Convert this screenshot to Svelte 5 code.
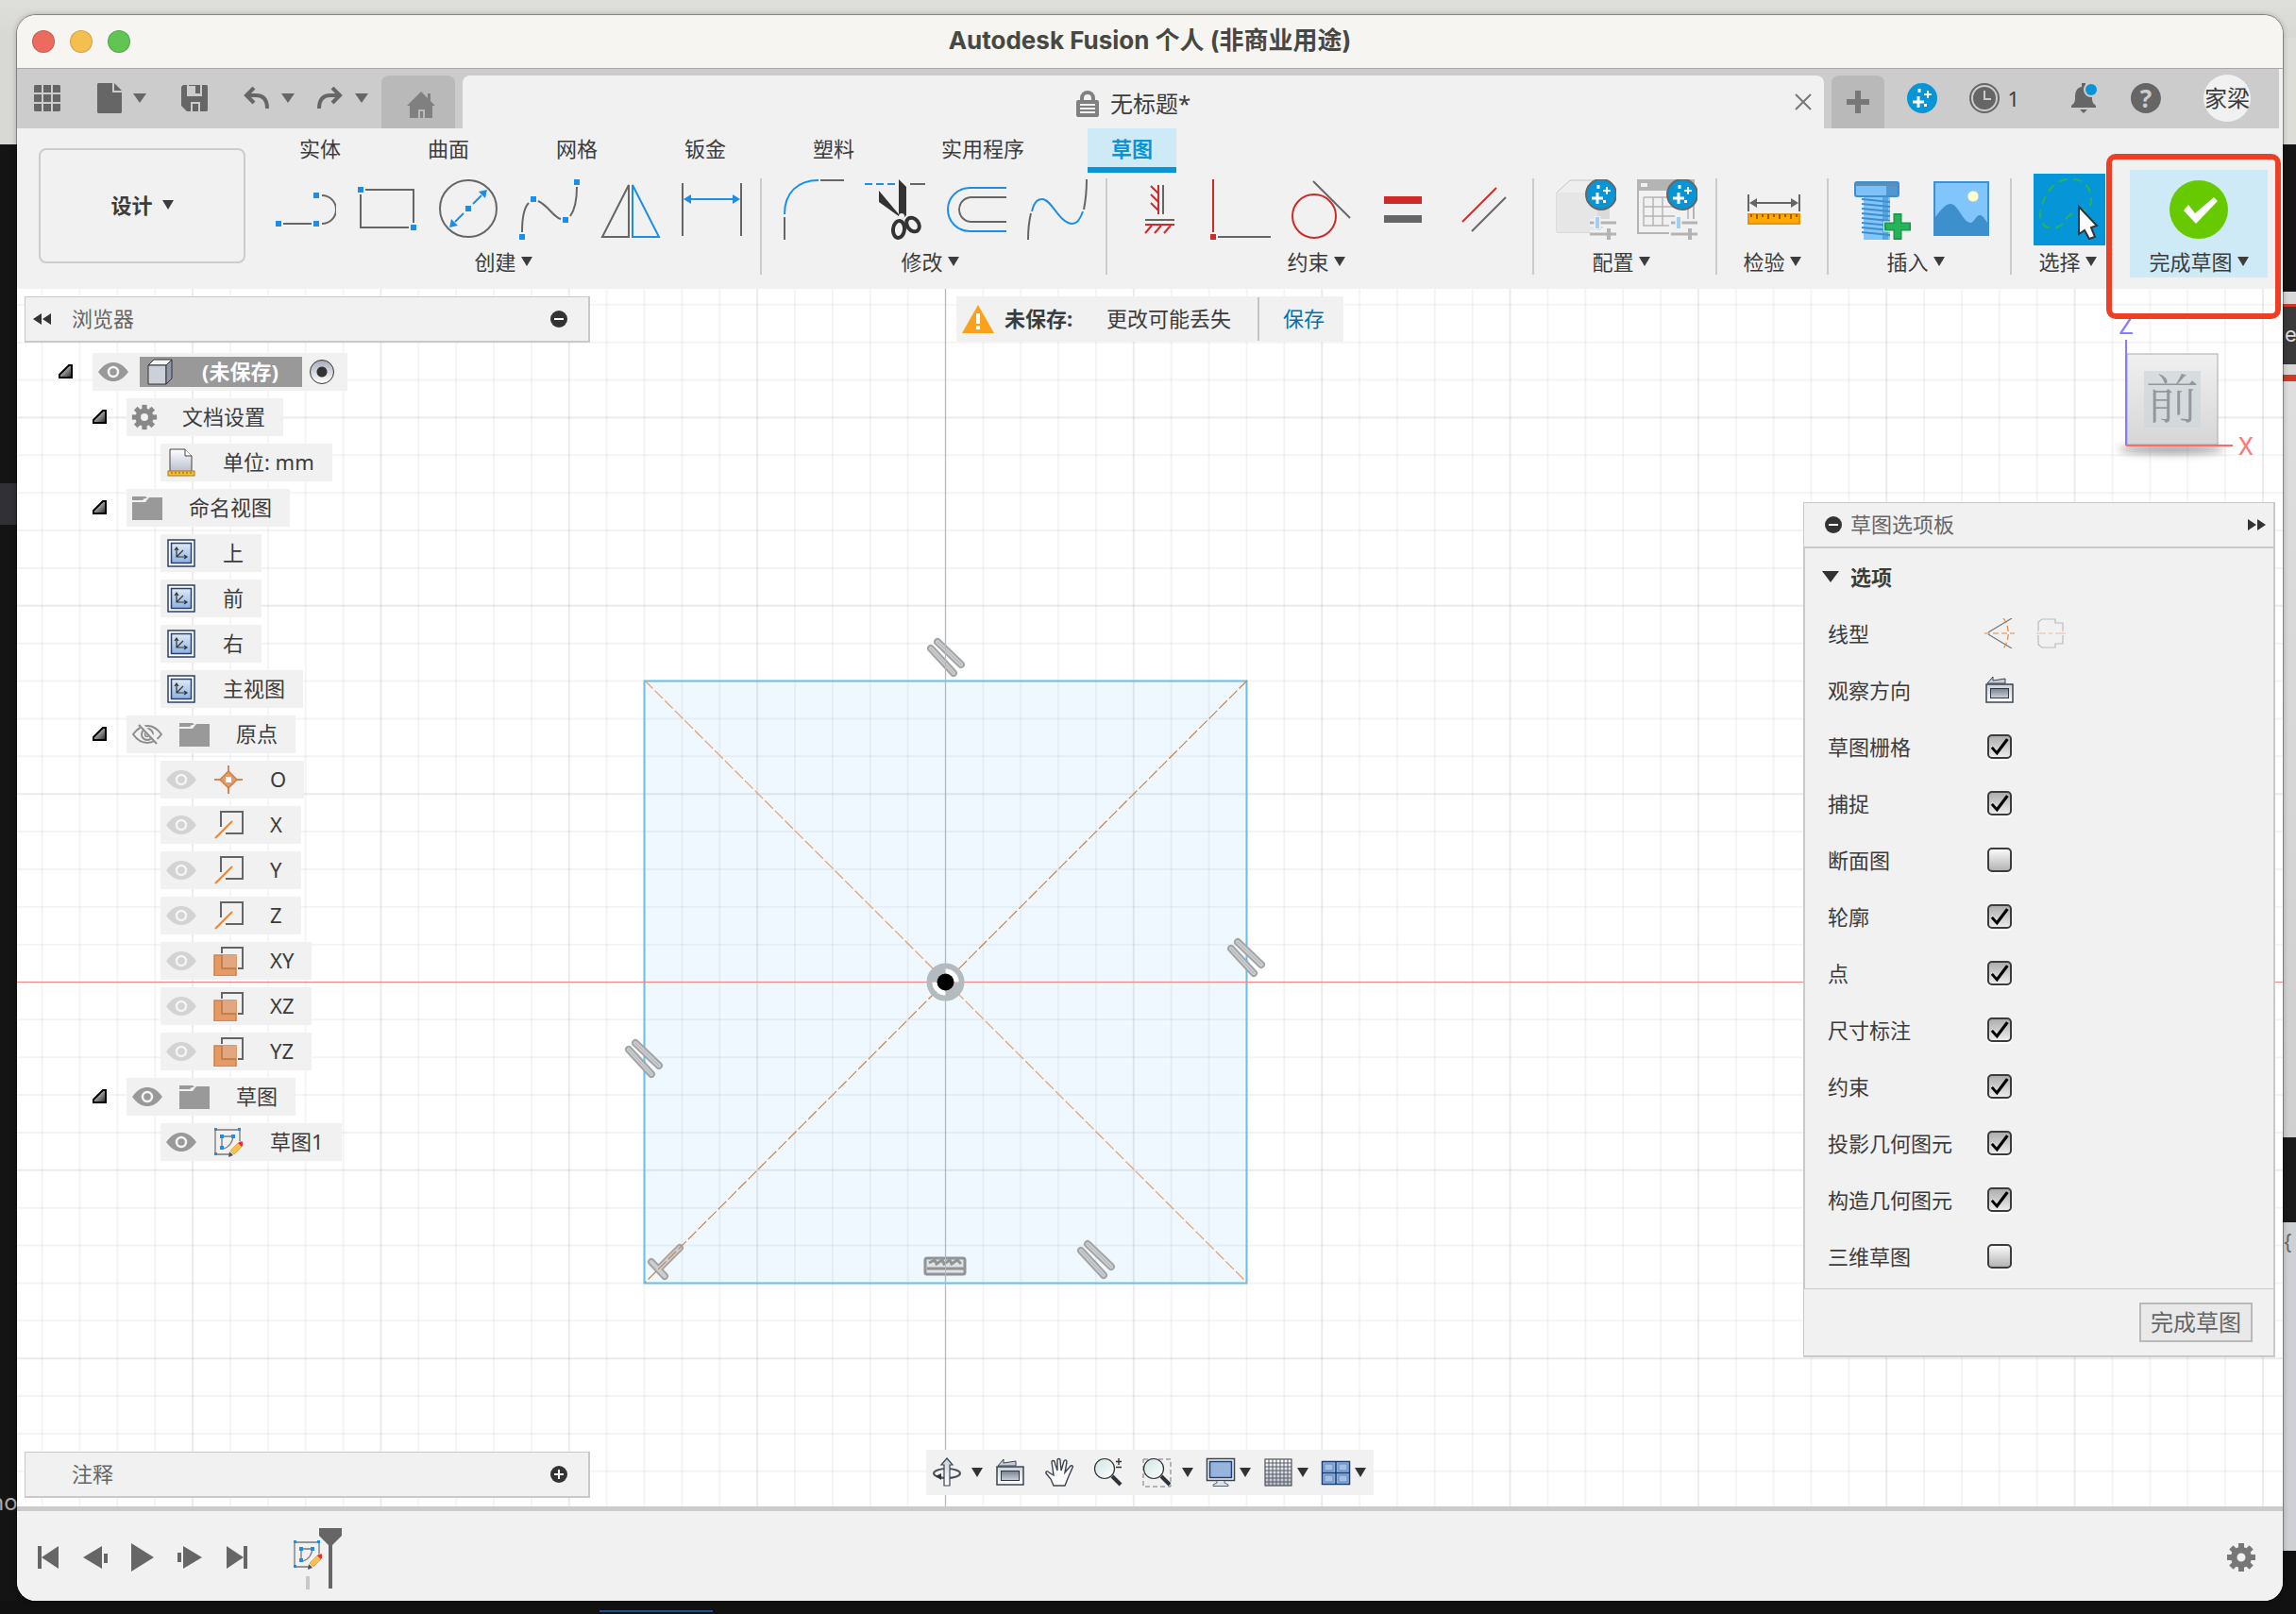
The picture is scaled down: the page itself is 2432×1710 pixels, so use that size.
<script>
  const STEP = 39.87;
  const ORIGIN = { x: 983.5, y: 734.5 };

  const columns = Array.from({ length: 60 }, (_, i) => i - 24);
  const rows = Array.from({ length: 34 }, (_, i) => i - 18);

  const workspaceTabs = ['实体', '曲面', '网格', '钣金', '塑料', '实用程序', '草图'];
  let activeTab = $state('草图');

  const groups = [
    { label: '创建', tools: ['line', 'rect', 'circle', 'spline', 'mirror', 'dimension'] },
    { label: '修改', tools: ['fillet', 'trim', 'offset', 'curve'] },
    { label: '约束', tools: ['horizontal', 'coincident', 'tangent', 'equal', 'parallel'] },
    { label: '配置', tools: ['config', 'configTable'] },
    { label: '检验', tools: ['measure'] },
    { label: '插入', tools: ['bolt', 'picture'] },
  ];

  const tree = [
    { level: 1, open: true, icons: ['gear'], label: '文档设置' },
    { level: 2, icons: ['unit'], label: '单位: mm' },
    { level: 1, open: true, icons: ['folder'], label: '命名视图' },
    { level: 2, icons: ['view'], label: '上' },
    { level: 2, icons: ['view'], label: '前' },
    { level: 2, icons: ['view'], label: '右' },
    { level: 2, icons: ['view'], label: '主视图' },
    { level: 1, open: true, icons: ['eyeOff', 'folder'], label: '原点' },
    { level: 2, icons: ['eyeDim', 'point'], label: 'O' },
    { level: 2, icons: ['eyeDim', 'axis'], label: 'X' },
    { level: 2, icons: ['eyeDim', 'axis'], label: 'Y' },
    { level: 2, icons: ['eyeDim', 'axis'], label: 'Z' },
    { level: 2, icons: ['eyeDim', 'plane'], label: 'XY' },
    { level: 2, icons: ['eyeDim', 'plane'], label: 'XZ' },
    { level: 2, icons: ['eyeDim', 'plane'], label: 'YZ' },
    { level: 1, open: true, icons: ['eye', 'folder'], label: '草图' },
    { level: 2, icons: ['eye', 'sketch'], label: '草图1' },
  ];

  let options = $state([
    { id: 'grid', label: '草图栅格', on: true },
    { id: 'snap', label: '捕捉', on: true },
    { id: 'slice', label: '断面图', on: false },
    { id: 'profile', label: '轮廓', on: true },
    { id: 'points', label: '点', on: true },
    { id: 'dims', label: '尺寸标注', on: true },
    { id: 'constraints', label: '约束', on: true },
    { id: 'projected', label: '投影几何图元', on: true },
    { id: 'construction', label: '构造几何图元', on: true },
    { id: 'sketch3d', label: '三维草图', on: false },
  ]);

  const navTools = [
    { name: 'orbit', menu: 'wide' },
    { name: 'look' },
    { name: 'pan' },
    { name: 'zoom' },
    { name: 'fit', menu: 'wide' },
    { name: 'display', menu: 'tight' },
    { name: 'gridSet', menu: 'tight' },
    { name: 'viewports', menu: 'tight' },
  ];

  const playback = ['start', 'prev', 'play', 'next', 'end'];
  const parallelMarks = [[984, 391], [1302, 709], [664, 816], [1143, 1029]];
  const teeth = [0, 45, 90, 135, 180, 225, 270, 315];
</script>

{#snippet caret()}
  <svg class="caret" width="12" height="10" viewBox="0 0 12 10" aria-hidden="true"><path d="M0 0H12L6 10Z" fill="currentColor" /></svg>
{/snippet}

{#snippet gear(color)}
  <g fill={color}>
    {#each teeth as a}
      <rect x="13" y="1" width="6" height="8" transform="rotate({a} 16 16)" />
    {/each}
    <path fill-rule="evenodd" d="M16 5a11 11 0 1 0 0 22a11 11 0 1 0 0-22zM16 11.500a4.500 4.500 0 1 1 0 9a4.500 4.500 0 1 1 0-9z" />
  </g>
{/snippet}

{#snippet spark(x, y)}
  <circle cx={x} cy={y} r="16" fill="#0696d7" />
  <g transform="translate({x} {y})" stroke="#fff" fill="none">
    <path stroke-width="3" d="M-4 -2V10M-10 4H2" />
    <path stroke-width="2" d="M6 -8V0M2 -4H10" />
    <path stroke-width="3" d="M-3 -10V-6M2 7.500H5" />
  </g>
{/snippet}

{#snippet sliders()}
  <path d="M36 46H64M36 58H64M56 53V64" stroke="#f1f1f1" stroke-width="8" />
  <path d="M36 46H64M36 58H64" stroke="#b4b4b4" stroke-width="3" />
  <path d="M56 52V64" stroke="#b4b4b4" stroke-width="4" />
  <path d="M44 39V53" stroke="#f1f1f1" stroke-width="7" />
  <path d="M44 40V52" stroke="#9fd0f5" stroke-width="4" />
{/snippet}

{#snippet sketchMark()}
  <path d="M2 3H28M2 3V29H20M28 3V15M9 10H21M9 10V22M21 10C20 17 17 21 11 23" fill="none" stroke="#777" stroke-width="1.300" />
  <g fill="#1b8fe8">
    <rect x="1" y="1" width="3" height="3" /><rect x="26" y="1" width="3" height="3" /><rect x="1" y="27" width="3" height="3" />
    <rect x="7" y="8" width="4" height="4" /><rect x="19" y="8" width="4" height="4" /><rect x="7" y="20" width="4" height="4" />
  </g>
  <path d="M17 26L21 30L16 32Z" fill="#555" />
  <path d="M18 25L26 17L30 21L22 29Z" fill="#fcbf49" stroke="#c9932f" stroke-width=".6" />
  <path d="M26 17L28 15.500H31V19.500L30 21Z" fill="#f02d2d" />
{/snippet}

{#snippet tool(name)}
  <svg width="64" height="64" viewBox="0 0 64 64" fill="none" stroke="#666" stroke-width="2" aria-hidden="true">
    {#if name === 'line'}
      <path d="M8 47H38M49 17A15 15 0 0 1 49 47" />
      <g fill="#1b8fe8" stroke="none"><rect y="44" width="6" height="6" /><rect x="40" y="44" width="6" height="6" /><rect x="40" y="14" width="6" height="6" /></g>
    {:else if name === 'rect'}
      <path d="M9 11H60V46M4 16V51H55" />
      <g fill="#1b8fe8" stroke="none"><rect x="1" y="8" width="6" height="6" /><rect x="57" y="48" width="6" height="6" /></g>
    {:else if name === 'circle'}
      <circle cx="32" cy="31" r="30" />
      <path d="M37 26L46 17M27 36L18 45" stroke="#1b8fe8" />
      <g fill="#1b8fe8" stroke="none"><rect x="29" y="28" width="6" height="6" /><path d="M52 11L50 20L43 13ZM12 51L14 42L21 49Z" /></g>
    {:else if name === 'spline'}
      <path d="M3 56C3 40 5 30 10 25M20 23C31 28 36 40 44 42M54 39C59 32 61 20 61 8" />
      <g fill="#1b8fe8" stroke="none"><rect y="58" width="6" height="6" /><rect x="12" y="18" width="6" height="6" /><rect x="46" y="40" width="6" height="6" /><rect x="58" width="6" height="6" /></g>
    {:else if name === 'mirror'}
      <path d="M30 6V61H2Z" />
      <path d="M34 6V61H62Z" stroke="#1b8fe8" />
    {:else if name === 'dimension'}
      <path d="M1 4V60M63 4V60" />
      <path d="M6 21H58" stroke="#1b8fe8" />
      <path d="M2 21L10 16V26ZM62 21L54 16V26Z" fill="#1b8fe8" stroke="none" />
    {:else if name === 'fillet'}
      <path d="M1 37C1 14 15 1 37 1" stroke="#1b8fe8" />
      <path d="M39 1H64M1 40V64" />
    {:else if name === 'trim'}
      <path d="M0 5H8M12 5H20M24 5H32" stroke="#1b8fe8" />
      <path d="M48 5H64" />
      <path d="M36 0L44 8V38L40 42L15 24V12L36 37Z" fill="#333" stroke="none" />
      <circle cx="39" cy="39" r="3" fill="#f1f1f1" stroke="none" />
      <ellipse cx="36" cy="53" rx="6" ry="9" stroke="#333" stroke-width="4" transform="rotate(6 36 53)" />
      <ellipse cx="51" cy="48" rx="6" ry="8" stroke="#333" stroke-width="4" transform="rotate(-38 51 48)" />
    {:else if name === 'offset'}
      <path d="M64 9H25A23 23 0 0 0 25 55H64" stroke="#1b8fe8" />
      <path d="M64 19H27A13 13 0 0 0 27 45H64" />
    {:else if name === 'curve'}
      <path d="M1 64C1 52 2 44 4 36M60 32C62 22 63 10 63 0" />
      <path d="M5 34C8 22 12 21 16 21C26 21 34 47 48 47C54 47 57 40 59 34" stroke="#1b8fe8" />
    {:else if name === 'horizontal'}
      <path d="M36 6V37M17 43H48" />
      <path d="M31 6V37M23 7L31 15M23 16L31 24M23 25L31 33M17 48H48M24 49L17 57M34 49L27 57M44 49L37 57" stroke="#cd2a2a" />
    {:else if name === 'coincident'}
      <path d="M3 0V56" stroke="#cd2a2a" />
      <path d="M8 61H64" />
      <rect y="58" width="6" height="6" fill="#cd2a2a" stroke="none" />
    {:else if name === 'tangent'}
      <circle cx="24" cy="39" r="23" stroke="#cd2a2a" />
      <path d="M23 2L62 41" />
    {:else if name === 'equal'}
      <rect x="12" y="18" width="40" height="8" fill="#cd2a2a" stroke="none" />
      <rect x="12" y="38" width="40" height="8" fill="#666" stroke="none" />
    {:else if name === 'parallel'}
      <path d="M9 45L45 9" stroke="#cd2a2a" />
      <path d="M19 55L55 19" />
    {:else if name === 'config'}
      <path d="M1 14L15 1H56V44L44 56H1Z" fill="#eee" stroke="#c4c4c4" stroke-width="1" />
      <path d="M1 14H44V56H1Z" fill="#e6e6e6" stroke="none" />
      <path d="M44 14L56 1V44L44 56Z" fill="#dadada" stroke="none" />
      {@render spark(48, 16)}
      {@render sliders()}
    {:else if name === 'configTable'}
      <path d="M1 1H60V50M1 1V57H34" stroke="#b4b4b4" />
      <rect width="60" height="12" fill="#b4b4b4" stroke="none" />
      <rect x="4" y="4" width="7" height="4" fill="#f1f1f1" stroke="none" />
      <path d="M7 19H54M7 19V49H34M7 29H54M7 39H40M17 19V49M27 19V49M54 19V42" stroke="#b4b4b4" stroke-width="1.500" />
      {@render spark(48, 16)}
      {@render sliders()}
    {:else if name === 'measure'}
      <path d="M5 16V34M59 16V34M8 25H56" />
      <path d="M6 25L14 20V30ZM58 25L50 20V30Z" fill="#666" stroke="none" />
      <rect x="5" y="37" width="54" height="10" fill="#ffa800" stroke="#e8930c" />
      <path d="M8 37V40M14 37V42M20 37V40M26 37V42M32 37V40M38 37V42M44 37V40M50 37V42M56 37V40" stroke="#6b4a10" stroke-width="1.500" />
    {:else if name === 'bolt'}
      <rect x="14" y="18" width="28" height="46" fill="#82c5fb" stroke="none" />
      <rect x="34" y="18" width="6" height="46" fill="#5aa6e0" stroke="none" />
      <path d="M12 21L42 24M12 26L42 29M12 31L42 34M12 36L42 39M12 41L42 44M12 46L42 49M12 51L42 54M12 56L42 59" stroke="#3f8ecb" />
      <rect x="5" y="3" width="46" height="15" rx="2" fill="#7cc1fa" stroke="#3f8ecb" />
      <rect x="38" y="4" width="12" height="13" fill="#4f97d2" stroke="none" />
      <rect x="6" y="4" width="44" height="3" fill="#5a8fb8" stroke="none" />
      <path d="M50 35V64M35 50H64" stroke="#f1f1f1" stroke-width="11" />
      <path d="M50 36V64M36 50H64" stroke="#1b9b49" stroke-width="9" />
      <path d="M50 38V62M38 50H62" stroke="#27b35a" stroke-width="6" />
    {:else if name === 'picture'}
      <rect x="3" y="3" width="57" height="56" fill="#80c6fd" stroke="#3d90cc" />
      <circle cx="44" cy="18" r="6" fill="#ffffd0" stroke="#a5cfc8" stroke-width="1" />
      <path d="M4 40C10 32 15 26 20 26C28 26 33 45 41 46C45 46 47 38 51 38C55 38 57 44 60 47V59H4Z" fill="#3d90cc" stroke="none" />
    {/if}
  </svg>
{/snippet}

{#snippet small(name)}
  <svg class:slim={name === 'gear'} width="32" height="32" viewBox="0 0 32 32" fill="none" aria-hidden="true">
    {#if name === 'gear'}
      {@render gear('#888')}
    {:else if name === 'unit'}
      <path d="M4 2H20L27 9V26H4Z" fill="url(#steel)" stroke="#444" />
      <path d="M20 2V9H27" fill="#fff" stroke="#444" />
      <rect x="2" y="25" width="28" height="5" fill="#f2c230" stroke="#b57310" />
      <path d="M6 26V28M10 26V28M14 26V28M18 26V28M22 26V28M26 26V28" stroke="#8a5508" />
    {:else if name === 'folder'}
      <path d="M0 4H14L16 6H13L11 8H0Z" fill="#999" />
      <path d="M0 10H14L18 5H32V29H0Z" fill="#999" />
    {:else if name === 'view'}
      <rect x="2" y="2" width="28" height="28" fill="#fff" stroke="#27406e" stroke-width="1.500" />
      <rect x="5.500" y="5.500" width="21" height="21" fill="url(#sky)" stroke="#27406e" stroke-width="1.500" />
      <path d="M11 11V20H21M11 20L18 13M9 13L11 10L13 13M19 18L22 20L19 22" stroke="#333" stroke-width="1.200" />
    {:else if name === 'eye' || name === 'eyeDim'}
      <path d="M0 16C6 8 11 6 16 6S26 8 32 16C26 24 21 26 16 26S6 24 0 16Z" fill={name === 'eye' ? '#999' : '#d3d3d3'} />
      <circle cx="16" cy="16" r="5" stroke="#f4f4f4" stroke-width="2.500" />
    {:else if name === 'eyeOff'}
      <path d="M1 16C6 9 11 7 16 7S26 9 31 16C26 23 21 25 16 25S6 23 1 16Z" stroke="#8c8c8c" stroke-width="2" />
      <circle cx="16" cy="16" r="6" stroke="#8c8c8c" stroke-width="2" />
      <circle cx="16" cy="16" r="2.500" stroke="#8c8c8c" stroke-width="1.500" />
      <path d="M8 5L28 26" stroke="#f1f1f1" stroke-width="5" />
      <path d="M7 6L26 26" stroke="#8c8c8c" stroke-width="2" />
    {:else if name === 'point'}
      <path d="M16 1V31M1 16H31" stroke="#d08a56" stroke-width="2" />
      <path d="M16 7L25 16L16 25L7 16Z" fill="#e79a63" stroke="#cf8048" stroke-width="1.500" />
      <rect x="13" y="13" width="6" height="6" fill="#fff" />
    {:else if name === 'axis'}
      <path d="M8 18V2H31V25H13" stroke="#666" stroke-width="2" />
      <path d="M2 30L20 12" stroke="#e8853d" stroke-width="2" />
    {:else if name === 'plane'}
      <rect x="1" y="10" width="23" height="22" fill="#e59a63" stroke="#cf8048" stroke-width="1.500" />
      <path d="M9 10V24H24V10Z" fill="#e1a880" />
      <path d="M9 10V24H24" stroke="#b87446" stroke-width="1.500" />
      <path d="M9 8V2H31V24H26" stroke="#666" stroke-width="2" />
    {:else if name === 'sketch'}
      {@render sketchMark()}
    {:else if name === 'look'}
      <path d="M3 9L9 2V6L22 4V9Z" fill="#c5ccd4" stroke="#3b4450" />
      <rect x="2" y="10" width="28" height="19" fill="url(#steelUp)" stroke="#3b4450" stroke-width="1.500" />
      <rect x="6.500" y="14.500" width="19" height="10" fill="url(#slate)" stroke="#2e3742" />
    {:else if name === 'construction'}
      <path d="M4 15L29 0M4 17L29 32" stroke="#777" stroke-width="1.200" />
      <path d="M0 16H32M20 0C27 9 27 23 20 32" stroke="#e8853d" stroke-width="1.200" stroke-dasharray="6 3" />
    {:else if name === 'centerline'}
      <path d="M2 14V4L6 1H20V5H28V14M2 18V28L6 31H20V27H28V18" stroke="#bbb" stroke-width="1.200" />
      <path d="M0 16H10M13 16H17M20 16H31" stroke="#efb99a" stroke-width="1.200" />
    {:else if name === 'orbit'}
      <ellipse cx="16" cy="17" rx="14" ry="5" stroke="#4b5058" stroke-width="2" />
      <path d="M13 30V8H10L16 1L22 8H19V30Z" fill="url(#steelUp)" stroke="#3b4450" stroke-width="1.200" />
      <path d="M4 20L10 17V24Z" fill="#333" />
    {:else if name === 'pan'}
      <path d="M10 30L7 23L2 17C1 15 4 14 5 16L10 19L8 5C8 3 11 3 11 5L14 14V3C14 1 17 1 17 3L18 14L21 4C22 2 24 3 24 5L22 16L28 9C30 8 31 10 30 11L26 20L22 30Z" fill="#fafafa" stroke="#3b4450" stroke-width="1.400" />
    {:else if name === 'zoom' || name === 'fit'}
      {#if name === 'fit'}<rect x="1" y="2" width="29" height="29" stroke="#777" stroke-dasharray="5 3" />{/if}
      <path d="M20 20L29 29" stroke="#2c333b" stroke-width="4" />
      <circle cx="12" cy="12" r="10.500" fill="url(#lens)" stroke="#333" stroke-width="1.200" />
      {#if name === 'zoom'}<path d="M27 1V8M24 4.500H30M24 10.500H30" stroke="#333" stroke-width="1.400" />{/if}
    {:else if name === 'display'}
      <rect x="1.500" y="1.500" width="29" height="23" fill="#f4f6f8" stroke="#3b4450" stroke-width="1.500" />
      <rect x="4.500" y="4.500" width="23" height="17" fill="#97b4dc" stroke="#1f3e73" stroke-width="1.500" />
      <path d="M12 25V27L8 29V30.500H24V29L20 27V25" fill="#dde2e8" stroke="#5a6370" />
    {:else if name === 'gridSet'}
      <rect x="2" y="2" width="28" height="28" fill="url(#steel)" stroke="#333" />
      <path d="M6 2V30M10 2V30M14 2V30M18 2V30M22 2V30M26 2V30M2 6H30M2 10H30M2 14H30M2 18H30M2 22H30M2 26H30" stroke="#555a66" />
    {:else if name === 'viewports'}
      <rect x="1.500" y="4.500" width="29" height="24" fill="#8fb3df" stroke="#1f3e73" stroke-width="1.500" />
      <path d="M16 4V29M1 16.500H31" stroke="#1f3e73" stroke-width="1.500" />
      <path d="M4 7H13V14H4ZM19 7H28V14H19ZM4 19H13V26H4ZM19 19H28V26H19Z" fill="#a3bfe4" stroke="#5f88bd" />
    {/if}
  </svg>
{/snippet}

<svg class="defs" width="0" height="0" aria-hidden="true">
  <defs>
    <linearGradient id="steel" x1="0" y1="0" x2="0" y2="1"><stop offset="0" stop-color="#fff" /><stop offset="1" stop-color="#b7bdcb" /></linearGradient>
    <linearGradient id="steelUp" x1="0" y1="0" x2="0" y2="1"><stop offset="0" stop-color="#cbd2da" /><stop offset="1" stop-color="#fff" /></linearGradient>
    <linearGradient id="sky" x1="0" y1="0" x2="0" y2="1"><stop offset="0" stop-color="#dfe9f6" /><stop offset="1" stop-color="#8fb2df" /></linearGradient>
    <linearGradient id="slate" x1="0" y1="0" x2="0" y2="1"><stop offset="0" stop-color="#76808e" /><stop offset="1" stop-color="#cdd3db" /></linearGradient>
    <linearGradient id="lens" x1="0" y1="0" x2="1" y2="1"><stop offset="0" stop-color="#cfe3e3" /><stop offset="1" stop-color="#fff" /></linearGradient>
    <linearGradient id="twist" x1="0" y1="0" x2="1" y2="1"><stop offset="0" stop-color="#fff" /><stop offset="1" stop-color="#222" /></linearGradient>
  </defs>
</svg>

<div class="desktop">
  <span class="behind left" aria-hidden="true">no</span>
  <span class="behind right" aria-hidden="true">er</span>
  <span class="behind brace" aria-hidden="true">{'{'}</span>
  <span class="blue-edge" aria-hidden="true"></span>

  <div class="window">
    <header class="titlebar">
      <div class="lights">
        <button class="close" aria-label="关闭"></button>
        <button class="min" aria-label="最小化"></button>
        <button class="zoom" aria-label="缩放"></button>
      </div>
      <h1>Autodesk Fusion 个人 (非商业用途)</h1>
    </header>

    <div class="tabbar">
      <div class="quick">
        <button aria-label="数据面板">
          <svg width="28" height="28" viewBox="0 0 28 28" fill="#666"><path d="M1 0H8V8H0V1ZM10 0H18V8H10ZM20 0H27L28 1V8H20ZM0 10H8V18H0ZM10 10H18V18H10ZM20 10H28V18H20ZM0 20H8V28H1L0 27ZM10 20H18V28H10ZM20 20H28V27L27 28H20Z" /></svg>
        </button>
        <button class="file" aria-label="文件">
          <svg width="26" height="32" viewBox="0 0 26 32" fill="#666"><path d="M1 0H16V10H26V31L25 32H1L0 31V1ZM18 0L26 8H18Z" /></svg>
          <svg width="16" height="10" viewBox="0 0 16 10" fill="#666"><path d="M1 0H15L8 10Z" /></svg>
        </button>
        <button class="save" aria-label="保存文件">
          <svg width="28" height="28" viewBox="0 0 28 28" fill="#666"><path fill-rule="evenodd" d="M2 0H6V12H22V0H27L28 1V27L27 28H20V18H10V28H6L0 22V2ZM8 0H20V10H8ZM12 20H18V28H12Z" /><path d="M8 1H20V10H8Z" fill="#ccc" /><path d="M15 0H20V9H15Z" fill="#666" /></svg>
        </button>
        <button class="undo" aria-label="撤消">
          <svg width="28" height="24" viewBox="0 0 28 24" fill="none" stroke="#666" stroke-width="4"><path d="M11 1L3 9L11 17M3 9H13C21 9 25 14 25 23" /></svg>
          <svg width="16" height="10" viewBox="0 0 16 10" fill="#666"><path d="M1 0H15L8 10Z" /></svg>
        </button>
        <button class="redo" aria-label="重做">
          <svg width="28" height="24" viewBox="0 0 28 24" fill="none" stroke="#666" stroke-width="4"><path d="M17 1L25 9L17 17M25 9H15C7 9 3 14 3 23" /></svg>
          <svg width="16" height="10" viewBox="0 0 16 10" fill="#666"><path d="M1 0H15L8 10Z" /></svg>
        </button>
      </div>
      <button class="home" aria-label="主页">
        <svg width="30" height="28" viewBox="0 0 30 28" fill="#808080"><path d="M15 0L22 7V2H25V10L30 15H27V28H19V19H12V28H3V15H0ZM14 21H17V28H14Z" /></svg>
      </button>
      <div class="doc">
        <div class="doc-title">
          <svg width="24" height="28" viewBox="0 0 24 28" fill="none"><path d="M6 11V8A6 6 0 0 1 18 8V11" stroke="#808080" stroke-width="4" /><rect y="10" width="24" height="18" rx="2" fill="#808080" /><path d="M4 15H20M4 19H20M4 23H20" stroke="#f1f1f1" stroke-width="2" /></svg>
          <span>无标题*</span>
        </div>
        <button class="doc-close" aria-label="关闭文档">
          <svg width="18" height="18" viewBox="0 0 18 18" stroke="#777" stroke-width="2"><path d="M1 1L17 17M17 1L1 17" /></svg>
        </button>
      </div>
      <button class="add" aria-label="新建设计">
        <svg width="24" height="24" viewBox="0 0 24 24" stroke="#777" stroke-width="6"><path d="M12 0V24M0 12H24" /></svg>
      </button>
      <div class="status">
        <button aria-label="扩展"><svg width="32" height="32" viewBox="0 0 32 32">{@render spark(16, 16)}</svg></button>
        <button class="jobs">
          <svg width="32" height="32" viewBox="0 0 32 32" fill="none"><circle cx="16" cy="16" r="15" stroke="#666" stroke-width="2" /><circle cx="16" cy="16" r="12" fill="#666" /><path d="M16 8V17H23" stroke="#ccc" stroke-width="2" /></svg>
          <span>1</span>
        </button>
        <button class="bell" aria-label="通知">
          <svg width="30" height="32" viewBox="0 0 30 32"><path d="M12 0H16V4C22 5 23 10 23 16C23 21 25 22 27 24V26H1V24C3 22 5 21 5 16C5 10 6 5 12 4ZM10 28H18L14 32Z" fill="#666" /><circle cx="22" cy="7" r="8" fill="#ccc" /><circle cx="22" cy="7" r="6" fill="#0696d7" /></svg>
        </button>
        <button class="help" aria-label="帮助">?</button>
        <button class="avatar">家梁</button>
      </div>
    </div>

    <div class="ribbon">
      <button class="workspace">设计 {@render caret()}</button>
      <div class="tools-area">
        <nav class="tabs">
          {#each workspaceTabs as tab}
            <button class:active={tab === activeTab} onclick={() => (activeTab = tab)}>{tab}</button>
          {/each}
        </nav>
        <div class="tools">
          {#each groups as group}
            <section class="group" class:single={group.tools.length === 1}>
              <div class="icons">
                {#each group.tools as name}
                  <button aria-label={name}>{@render tool(name)}</button>
                {/each}
              </div>
              <button class="group-label">{group.label}{@render caret()}</button>
            </section>
          {/each}
          <section class="group single select">
            <div class="icons">
              <button class="lasso" aria-label="选择工具">
                <svg width="76" height="76" viewBox="0 0 76 76" fill="none">
                  <path d="M35 6C18 8 8 28 7 45C7 56 18 60 27 56C34 52 33 46 40 43C50 40 62 42 61 25C60 12 50 4 35 6Z" stroke="#27b35a" stroke-width="2" stroke-dasharray="9 6" />
                  <path d="M48 35L67 55L61 57L65 67L59 69L54 60L48 64Z" fill="#fff" stroke="#333" stroke-width="2" />
                </svg>
              </button>
            </div>
            <button class="group-label">选择{@render caret()}</button>
          </section>
          <button class="finish">
            <svg width="64" height="64" viewBox="0 0 64 64"><circle cx="32" cy="32" r="31" fill="#67c900" /><path d="M16 33L21 27L28 36L48 19L52 23L29 47Z" fill="#fff" /></svg>
            <span>完成草图{@render caret()}</span>
          </button>
        </div>
      </div>
      <span class="callout" aria-hidden="true"></span>
    </div>

    <main class="viewport">
      <svg class="canvas" viewBox="0 0 2400 1290" preserveAspectRatio="xMinYMin slice" aria-hidden="true">
        <rect x={ORIGIN.x - 319} y={ORIGIN.y - 319} width="638" height="638" fill="#eff8fe" />
        <g transform="translate({ORIGIN.x} {ORIGIN.y})" stroke="#000" stroke-width="2">
          {#each columns as c}
            <line x1={c * STEP} x2={c * STEP} y1="-800" y2="800" stroke-opacity={c % 5 ? 0.045 : 0.08} />
          {/each}
          {#each rows as r}
            <line y1={r * STEP} y2={r * STEP} x1="-1000" x2="1500" stroke-opacity={r % 5 ? 0.045 : 0.08} />
          {/each}
        </g>
        <rect x={ORIGIN.x - 319} y={ORIGIN.y - 319} width="638" height="638" fill="none" stroke="#6bc0e6" stroke-width="2" />
        {#each parallelMarks as [x, y]}
          <g transform="translate({x} {y})" stroke-linecap="round">
            <path d="M-16 -10L8 16M-9 -17L16 7" stroke="#a3a5a7" stroke-width="8" />
            <path d="M-16 -10L8 16M-9 -17L16 7" stroke="#cdd0d2" stroke-width="4" />
            <path d="M-16 -10L8 16M-9 -17L16 7" stroke="#abaeb0" stroke-width="1" />
          </g>
        {/each}
        <g stroke-linecap="round" fill="none">
          <path d="M702 1016L680 1038M672 1031L686 1046" stroke="#a3a5a7" stroke-width="8" />
          <path d="M702 1016L680 1038M672 1031L686 1046" stroke="#cdd0d2" stroke-width="4" />
        </g>
        <rect x="962" y="1027" width="42" height="17" rx="2" fill="#dfe3e5" stroke="#909496" stroke-width="3" />
        <path d="M964 1038H1003" stroke="#909496" stroke-width="3" />
        <path d="M966 1032L972 1029L974 1033L980 1029L982 1033L988 1029L990 1033L996 1029L1000 1033" fill="none" stroke="#909496" stroke-width="3" />
        <path d="M0 {ORIGIN.y}H2400" stroke="#e98b8b" />
        <path d="M{ORIGIN.x} 0V1290" stroke="#7fe07f" />
        <g stroke-width="1.200" stroke-dasharray="12 3">
          <path d="M665 415L974 724M994 744L1303 1053" stroke="#e0a070" />
          <path d="M1303 415L994 724M974 744L665 1053" stroke="#d87f38" />
        </g>
        <circle cx={ORIGIN.x} cy={ORIGIN.y} r="17" fill="none" stroke="#b3bbbf" stroke-width="6" />
        <g transform="translate({ORIGIN.x} {ORIGIN.y})">
          <path d="M0 0V-16A16 16 0 0 0 -16 0ZM0 0V16A16 16 0 0 0 16 0Z" fill="#b3bbbf" />
          <path d="M0 0V-14A14 14 0 0 1 14 0ZM0 0V14A14 14 0 0 1 -14 0Z" fill="#fff" fill-opacity=".8" />
          <circle r="9" fill="#000" />
        </g>
      </svg>

      <div class="overlay">
        <aside class="side">
          <div class="panel-bar">
            <svg width="20" height="14" viewBox="0 0 20 14" fill="#333"><path d="M0 7L9 1V13ZM10 7L19 1V13Z" /></svg>
            <span>浏览器</span>
            <button class="dot" aria-label="折叠"><svg width="18" height="18" viewBox="0 0 18 18"><circle cx="9" cy="9" r="9" fill="#333" /><path d="M4 9H14" stroke="#fff" stroke-width="2" /></svg></button>
          </div>
          <ul class="tree">
            <li>
              <span class="twist"><svg width="16" height="16" viewBox="0 0 16 16"><path d="M1 11L11 1H14V14H1Z" fill="url(#twist)" stroke="#000" stroke-width="2" /></svg></span>
              <div class="item root">
                {@render small('eye')}
                <div class="selected">
                  <svg width="28" height="28" viewBox="0 0 28 28" stroke="#333"><path d="M1 7L7 1H26L20 7Z" fill="#f2f3f5" /><path d="M1 7H20V27H1Z" fill="#ccd0d9" /><path d="M20 7L26 1V21L20 27Z" fill="#8f97a8" /></svg>
                  <strong>(未保存)</strong>
                </div>
                <input type="radio" checked aria-label="激活零部件" />
              </div>
            </li>
            {#each tree as node}
              <li class:deep={node.level === 2} class:mid={node.level === 1}>
                <span class="twist">
                  {#if node.open}
                    <svg width="16" height="16" viewBox="0 0 16 16"><path d="M1 11L11 1H14V14H1Z" fill="url(#twist)" stroke="#000" stroke-width="2" /></svg>
                  {/if}
                </span>
                <div class="item">
                  {#each node.icons as icon}{@render small(icon)}{/each}
                  <span class="name">{node.label}</span>
                </div>
              </li>
            {/each}
          </ul>
          <div class="panel-bar comments">
            <span>注释</span>
            <button class="dot" aria-label="展开"><svg width="18" height="18" viewBox="0 0 18 18"><circle cx="9" cy="9" r="9" fill="#333" /><path d="M4 9H14M9 4V14" stroke="#fff" stroke-width="2" /></svg></button>
          </div>
        </aside>

        <div class="centre">
          <div class="notice">
            <svg width="34" height="30" viewBox="0 0 34 30"><path d="M17 0L34 30H0Z" fill="#faa21b" /><path d="M17 9V20M17 22V26" stroke="#fff" stroke-width="4" /></svg>
            <strong>未保存:</strong>
            <span>更改可能丢失</span>
            <button>保存</button>
          </div>
          <div class="navbar">
            {#each navTools as item}
              <button class={item.menu} aria-label={item.name}>
                {@render small(item.name)}
                {#if item.menu}{@render caret()}{/if}
              </button>
            {/each}
          </div>
        </div>

        <aside class="right-side">
          <svg class="cube" width="160" height="170" viewBox="0 0 160 170">
            <defs>
              <linearGradient id="face" x1="0" y1="0" x2="0" y2="1"><stop offset="0" stop-color="#f0f0f0" /><stop offset="1" stop-color="#d6d6d6" /></linearGradient>
              <filter id="soft" x="-20%" y="-100%" width="140%" height="300%"><feGaussianBlur stdDeviation="4" /></filter>
            </defs>
            <ellipse cx="70" cy="146" rx="56" ry="5" fill="#777" fill-opacity=".7" filter="url(#soft)" />
            <rect x="23" y="45" width="96" height="96" fill="url(#face)" stroke="#a8a8a8" />
            <rect x="41" y="63" width="60" height="60" fill="#cfd5da" fill-opacity=".7" />
            <text class="face" x="71" y="113" text-anchor="middle">前</text>
            <path d="M22 30V142" stroke="#8080ff" stroke-width="2" />
            <path d="M22 142H135" stroke="#f96c6c" stroke-width="2" />
            <text class="axis-z" x="22" y="24" text-anchor="middle">Z</text>
            <text class="axis-x" x="149" y="152" text-anchor="middle">X</text>
          </svg>

          <section class="palette">
            <div class="palette-head">
              <button class="dot" aria-label="折叠选项板"><svg width="18" height="18" viewBox="0 0 18 18"><circle cx="9" cy="9" r="9" fill="#333" /><path d="M4 9H14" stroke="#fff" stroke-width="2" /></svg></button>
              <span>草图选项板</span>
              <svg class="dock" width="20" height="14" viewBox="0 0 20 14" fill="#333"><path d="M10 7L1 1V13ZM20 7L11 1V13Z" /></svg>
            </div>
            <div class="palette-body">
              <button class="section"><svg width="18" height="12" viewBox="0 0 18 12"><path d="M0 0H18L9 12Z" fill="#333" /></svg>选项</button>
              <div class="opt"><span>线型</span><button aria-label="构造">{@render small('construction')}</button><button aria-label="中心线">{@render small('centerline')}</button></div>
              <div class="opt"><span>观察方向</span><button aria-label="观察方向">{@render small('look')}</button></div>
              {#each options as opt}
                <div class="opt">
                  <label for={opt.id}>{opt.label}</label>
                  <input id={opt.id} type="checkbox" bind:checked={opt.on} />
                </div>
              {/each}
            </div>
            <div class="palette-foot"><button>完成草图</button></div>
          </section>
        </aside>
      </div>
    </main>

    <footer class="timeline">
      <div class="playback">
        {#each playback as name}
          <button aria-label={name}>
            <svg width="26" height="32" viewBox="0 0 26 32" fill="#666">
              {#if name === 'start'}<path d="M2 4H6V28H2ZM6 16L24 4V28Z" />
              {:else if name === 'prev'}<path d="M0 16L20 4V28ZM22 12H26V22H22Z" />
              {:else if name === 'play'}<path d="M1 1L25 16L1 31Z" />
              {:else if name === 'next'}<path d="M0 11H4V21H0ZM6 4L26 16L6 28Z" />
              {:else}<path d="M2 4L20 16L2 28ZM20 4H24V28H20Z" />{/if}
            </svg>
          </button>
        {/each}
      </div>
      <div class="feature">
        {@render small('sketch')}
        <span class="tick"></span>
      </div>
      <svg class="marker" width="24" height="64" viewBox="0 0 24 64" fill="#666"><path d="M0 0H24V8L14 18V64H10V18L0 8Z" /></svg>
      <button class="settings" aria-label="时间轴设置"><svg width="32" height="32" viewBox="0 0 32 32">{@render gear('#777')}</svg></button>
    </footer>
  </div>
</div>

<style>
  :global(body) {
    margin: 0;
  }

  .defs {
    position: absolute;
  }

  .desktop {
    position: relative;
    box-sizing: border-box;
    min-height: 100vh;
    padding: 16px 14px 14px 18px;
    display: flex;
    overflow: hidden;
    font-family: "Noto Sans", "Noto Sans CJK SC", sans-serif;
    font-size: 22px;
    line-height: 32px;
    color: #3c3c3c;
    background:
      linear-gradient(#dededb, #d8d8d5) 0 0 / 100% 40px no-repeat,
      linear-gradient(#111, #111) 0 100% / 100% 14px no-repeat,
      linear-gradient(#d8d8d5 0 153px, #141414 153px 512px, #303036 512px 556px, #141414 556px) 0 0 / 18px 100% no-repeat,
      linear-gradient(#dcdcd9 0 153px, #151515 153px 309px, #d8d8d8 309px 322px, #cf3a26 322px 325px, #3a3a3a 325px 386px, #d8d8d8 386px 397px, #cf3a26 397px 404px, #dedede 404px, #cfcfcf 1205px, #1a1a1a 1205px 1295px, #cfd0d3 1295px 1643px, #111 1643px) 100% 0 / 20px 100% no-repeat,
      #111;
  }

  .behind {
    position: absolute;
    font-family: Inter, sans-serif;
    color: #aaa;
  }

  .behind.left {
    left: -10px;
    bottom: 102px;
    font-size: 24px;
  }

  .behind.right {
    right: -9px;
    top: 338px;
    color: #ddd;
  }

  .behind.brace {
    right: 4px;
    top: 1300px;
    color: #666;
  }

  .blue-edge {
    position: absolute;
    left: 635px;
    bottom: 2px;
    width: 120px;
    height: 2px;
    background: #22508f;
  }

  .window {
    position: relative;
    flex: 1;
    display: flex;
    flex-direction: column;
    border-radius: 20px;
    overflow: hidden;
    background: #f1f1f1;
    box-shadow: 0 0 0 1px rgba(0, 0, 0, 0.3), 0 0 6px rgba(0, 0, 0, 0.3);
  }

  button {
    padding: 0;
    border: 0;
    background: none;
    font: inherit;
    color: inherit;
    display: flex;
    align-items: center;
    justify-content: center;
    cursor: pointer;
  }

  svg {
    display: block;
    flex: none;
  }

  .titlebar {
    box-sizing: border-box;
    height: 57px;
    display: grid;
    grid-template-columns: 1fr auto 1fr;
    align-items: center;
    border-bottom: 1px solid #a9a9a9;
    background: #f6f5f1;
  }

  .lights {
    display: flex;
    gap: 16px;
    padding-left: 16px;
  }

  .lights button {
    width: 24px;
    height: 24px;
    border-radius: 50%;
    border: 1px solid rgba(0, 0, 0, 0.15);
  }

  .lights .close { background: #ec6a5e; }
  .lights .min { background: #f4bf4f; }
  .lights .zoom { background: #61c554; }

  h1 {
    margin: 0;
    padding-bottom: 2px;
    font-family: Inter, "Noto Sans CJK SC", sans-serif;
    font-size: 26px;
    font-weight: 700;
    color: #474744;
  }

  .tabbar {
    box-sizing: border-box;
    height: 63px;
    margin-right: 4px;
    padding-top: 7px;
    display: flex;
    background: #ccc;
  }

  .quick {
    display: flex;
    align-items: center;
    height: 48px;
    padding-left: 18px;
    width: 368px;
  }

  .file { margin-left: 39px; gap: 11px; }
  .save { margin-left: 36px; }
  .undo { margin-left: 38px; gap: 11px; }
  .redo { margin-left: 22px; gap: 12px; }

  .home,
  .add {
    border-radius: 8px 8px 0 0;
    background: #b9b9b9;
  }

  .home {
    width: 78px;
    margin-right: 8px;
    padding: 5px 0 0 6px;
    box-sizing: border-box;
  }

  .doc {
    flex: 1;
    display: flex;
    align-items: center;
    border-radius: 8px 8px 0 0;
    background: #f1f1f1;
  }

  .doc-title {
    flex: 1;
    display: flex;
    align-items: center;
    justify-content: center;
    gap: 12px;
    font-size: 24px;
    padding: 3px 0 0 10px;
  }

  .doc-close {
    margin-right: 13px;
  }

  .add {
    width: 56px;
    margin-left: 8px;
  }

  .status {
    display: flex;
    align-items: center;
    height: 48px;
    padding: 0 30px 0 24px;
  }

  .jobs {
    margin-left: 34px;
    gap: 8px;
  }

  .bell { margin-left: 54px; }

  .help {
    width: 32px;
    height: 32px;
    margin-left: 34px;
    border-radius: 50%;
    background: #666;
    color: #ccc;
    font-weight: 700;
    font-size: 26px;
  }

  .avatar {
    width: 50px;
    height: 50px;
    margin-left: 45px;
    border-radius: 50%;
    background: #f1f1f1;
    font-size: 24px;
    white-space: nowrap;
  }

  .ribbon {
    position: relative;
    height: 170px;
    display: flex;
    background: #f1f1f1;
  }

  .caret {
    margin-left: 5px;
  }

  .workspace {
    box-sizing: border-box;
    width: 219px;
    height: 122px;
    margin: 21px 3px 0 23px;
    padding-bottom: 2px;
    border: 2px solid #ccc;
    border-radius: 8px;
    font-weight: 700;
  }

  .workspace .caret {
    margin-left: 10px;
  }

  .tools-area {
    flex: 1;
    display: flex;
    flex-direction: column;
  }

  .tabs {
    display: flex;
    gap: 42px;
    height: 44px;
    padding-left: 29px;
  }

  .tabs button {
    box-sizing: border-box;
    height: 47px;
    padding: 0 25px;
    border-bottom: 6px solid transparent;
  }

  .tabs .active {
    color: #0696d7;
    font-weight: 700;
    background: #cdeaf6;
    border-bottom-color: #0696d7;
  }

  .tools {
    display: flex;
    align-items: flex-start;
    padding-left: 6px;
  }

  .group {
    box-sizing: border-box;
    height: 102px;
    min-width: 118px;
    margin-top: 9px;
    padding: 0 8px 0 12px;
    display: flex;
    flex-direction: column;
    align-items: center;
    justify-content: space-between;
    border-right: 2px solid #ccc;
  }

  .icons {
    display: flex;
    height: 66px;
  }

  .icons button {
    width: 86px;
  }

  .group-label {
    line-height: 24px;
    margin-right: 12px;
    padding-bottom: 2px;
  }

  .single .group-label {
    margin-right: 4px;
  }

  .select {
    border-right: 0;
  }

  .icons .lasso {
    width: 76px;
    height: 76px;
    margin-top: -5px;
    background: #0696d7;
  }

  .finish {
    width: 146px;
    height: 114px;
    margin: 0 16px 0 auto;
    flex-direction: column;
    justify-content: flex-start;
    gap: 11px;
    padding-top: 10px;
    box-sizing: border-box;
    background: #cdeaf6;
  }

  .finish span {
    display: flex;
    align-items: center;
    line-height: 24px;
  }

  .callout {
    position: absolute;
    z-index: 2;
    box-sizing: border-box;
    right: 2px;
    top: 27px;
    width: 185px;
    height: 175px;
    border: 6px solid #ec3f26;
    border-radius: 10px;
  }

  .viewport {
    position: relative;
    flex: 1;
    display: flex;
    background: #fff;
  }

  .canvas {
    position: absolute;
    inset: 0;
    width: 100%;
    height: 100%;
  }

  .overlay {
    position: relative;
    flex: 1;
    display: grid;
    grid-template-columns: 1fr auto 1fr;
    padding: 8px;
  }

  .side {
    display: flex;
    flex-direction: column;
  }

  .panel-bar,
  .palette-head {
    box-sizing: border-box;
    height: 49px;
    display: flex;
    align-items: center;
    border: solid #c9c9c9;
    border-width: 1px 2px 2px 1px;
    background: #f1f1f1;
    color: #666;
  }

  .panel-bar {
    width: 599px;
    padding: 0 22px 0 8px;
    gap: 21px;
  }

  .panel-bar span,
  .palette-head span,
  .notice strong,
  .notice span,
  .notice button,
  .selected strong {
    padding-bottom: 2px;
  }

  .dot {
    margin-left: auto;
  }

  .comments {
    margin-top: auto;
    margin-bottom: 1px;
    padding-left: 49px;
  }

  .tree {
    list-style: none;
    margin: 11px 0 0;
    padding: 0 0 0 36px;
    display: flex;
    flex-direction: column;
    gap: 8px;
  }

  .tree li {
    display: flex;
    height: 40px;
  }

  .tree .mid { padding-left: 36px; }
  .tree .deep { padding-left: 72px; }

  .twist {
    width: 36px;
    display: flex;
    align-items: center;
  }

  .item {
    display: flex;
    align-items: center;
    padding: 0 19px 0 6px;
    gap: 18px;
    background: #f1f1f1;
    white-space: nowrap;
  }

  .item .slim {
    width: 28px;
    margin: 0 -2px 0 -1px;
  }

  .name {
    min-width: 14px;
    padding: 0 0 2px 10px;
  }

  .root {
    gap: 12px;
    padding-right: 14px;
  }

  .selected {
    box-sizing: border-box;
    width: 172px;
    height: 32px;
    margin-right: -4px;
    padding-left: 8px;
    display: flex;
    align-items: center;
    gap: 30px;
    background: #999;
    color: #fff;
  }

  input[type='radio'] {
    appearance: none;
    width: 26px;
    height: 26px;
    margin: 0;
    border: 1px solid #333;
    border-radius: 50%;
    background: radial-gradient(#333 0 5px, transparent 6px), linear-gradient(#a8aebb, #fff);
  }

  .centre {
    display: flex;
    flex-direction: column;
    align-items: center;
    justify-content: space-between;
  }

  .notice,
  .navbar {
    display: flex;
    align-items: center;
    height: 48px;
    background: #f1f1f1;
  }

  .notice {
    padding-left: 6px;
  }

  .notice strong {
    margin: 0 36px 0 11px;
  }

  .notice button {
    box-sizing: border-box;
    height: 46px;
    margin-left: 28px;
    padding-left: 25px;
    padding-right: 20px;
    border-left: 2px solid #c4c4c4;
    color: #0071b8;
  }

  .navbar {
    box-sizing: border-box;
    margin-bottom: 4px;
    padding: 0 8px 0 6px;
    gap: 20px;
    color: #333;
  }

  .navbar .wide,
  .navbar .tight {
    margin-right: -7px;
  }

  .navbar .wide .caret {
    margin-left: 10px;
  }

  .navbar .tight .caret {
    margin-left: 4px;
  }

  .navbar button:last-child {
    margin-right: 0;
  }

  .right-side {
    display: flex;
    flex-direction: column;
    align-items: flex-end;
  }

  .cube {
    margin: 16px 20px 0 0;
  }

  .face {
    font-family: "Noto Serif CJK SC", "Noto Sans CJK SC", serif;
    font-size: 56px;
    font-weight: 300;
    fill: #92989e;
  }

  .axis-z,
  .axis-x {
    font-family: Roboto, sans-serif;
    font-size: 26px;
    fill: #8080ff;
  }

  .axis-x {
    fill: #ff7b7b;
  }

  .palette {
    width: 500px;
    margin-top: 32px;
  }

  .palette-head {
    padding: 0 8px 0 22px;
    gap: 9px;
  }

  .palette-head .dot {
    margin-left: 0;
  }

  .dock {
    margin-left: auto;
  }

  .palette-body {
    padding: 0 24px 4px;
    border: solid #c9c9c9;
    border-width: 0 2px;
    background: #f1f1f1;
  }

  .section {
    height: 60px;
    gap: 12px;
    margin-left: -6px;
    font-weight: 700;
  }

  .opt {
    height: 60px;
    display: flex;
    align-items: center;
  }

  .opt span,
  .opt label {
    width: 169px;
  }

  .opt button {
    margin: 0 26px 0 -3px;
  }

  input[type='checkbox'] {
    appearance: none;
    position: relative;
    box-sizing: border-box;
    width: 26px;
    height: 26px;
    margin: 0;
    border: 2px solid #3c3c3c;
    border-radius: 5px;
    background: linear-gradient(#fafafa, #b4b4b4);
    box-shadow: 0 2px 1px #fff;
  }

  input[type='checkbox']:checked {
    background: linear-gradient(#adadad, #ececec);
  }

  input[type='checkbox']:checked::after {
    content: '';
    position: absolute;
    inset: 0;
    background: #000;
    clip-path: polygon(8% 58%, 18% 50%, 36% 70%, 82% 10%, 94% 18%, 38% 92%);
  }

  .palette-foot {
    box-sizing: border-box;
    height: 73px;
    padding-right: 22px;
    display: flex;
    align-items: center;
    justify-content: flex-end;
    border: solid #c9c9c9;
    border-width: 1px 2px 2px 1px;
    background: #f1f1f1;
  }

  .palette-foot button {
    box-sizing: border-box;
    width: 120px;
    height: 42px;
    border: 2px solid #b9b9b9;
    background: #e9e9e9;
    color: #666;
    font-size: 24px;
  }

  .timeline {
    box-sizing: border-box;
    height: 100px;
    padding: 0 28px 0 20px;
    display: flex;
    align-items: center;
    border-top: 5px solid #cbcbcb;
    background: #f1f1f1;
  }

  .playback {
    display: flex;
    gap: 24px;
  }

  .playback,
  .settings {
    margin-top: 3px;
  }

  .feature {
    display: flex;
    flex-direction: column;
    align-items: center;
    gap: 7px;
    margin: 18px 0 0 46px;
  }

  .tick {
    width: 4px;
    height: 14px;
    background: #c8c8c8;
  }

  .marker {
    margin: 5px 0 0 -4px;
  }

  .settings {
    margin-left: auto;
  }
</style>
